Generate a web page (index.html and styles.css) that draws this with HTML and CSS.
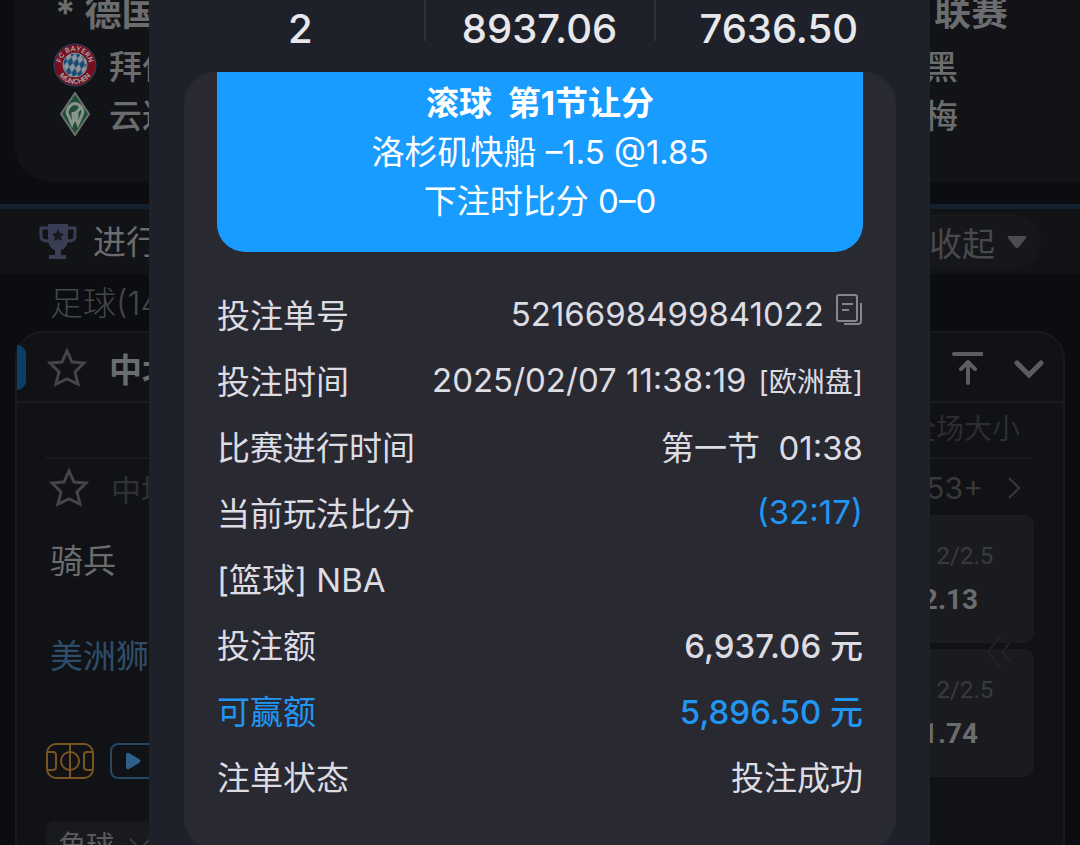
FILE: index.html
```html
<!DOCTYPE html>
<html lang="zh-CN">
<head>
  <meta charset="UTF-8">
  <meta name="viewport" content="width=device-width, initial-scale=1">
  <title>注单详情</title>
  <link rel="stylesheet" href="styles.css">
</head>
<body>
  <main class="page">
    <section class="league-card">
      <div class="league-title"><span>* 德国甲级</span><span>联赛</span></div>
      <div class="league-team">
        <svg class="crest" viewBox="0 0 44 44">
          <defs>
            <path id="arcTop" d="M8 22a14 14 0 0 1 28 0"/>
            <path id="arcBottom" d="M3 22a19 19 0 0 0 38 0"/>
            <pattern id="lozenge" width="6" height="10" patternUnits="userSpaceOnUse" patternTransform="rotate(12)">
              <rect width="6" height="10" fill="#8e959b"/>
              <path d="M3 0l3 5-3 5-3-5z" fill="#174b77"/>
            </pattern>
          </defs>
          <circle cx="22" cy="22" r="21" fill="#74101f" stroke="#21466b" stroke-width="1"/>
          <circle cx="22" cy="22" r="12" fill="url(#lozenge)" stroke="#8b8f94" stroke-width="1"/>
          <text class="crest-text"><textPath href="#arcTop" startOffset="50%">FC BAYERN</textPath></text>
          <text class="crest-text"><textPath href="#arcBottom" startOffset="50%">MÜNCHEN</textPath></text>
        </svg>
        <span>拜仁慕尼</span><span class="team-away">黑</span>
      </div>
      <div class="league-team">
        <svg class="crest" viewBox="0 0 44 44">
          <path d="M22 1l14 21-14 21L8 22z" fill="#1d4f35" stroke="#686f6c" stroke-width="2"/>
          <path d="M16 15q6-7 12 0M16 15q-3 5-1 8l4 9 3-9 3 9 4-9q2-4-1-8l-4 5v5l-2 3-2-3v-5" fill="none" stroke="#8a938e" stroke-width="3"/>
        </svg>
        <span>云达不莱</span><span class="team-away">梅</span>
      </div>
    </section>

    <section class="live-bar">
      <svg class="trophy" viewBox="0 0 38 36">
        <path d="M9 0h20v14q0 10-7 12v5h5v4H10v-4h6v-5q-7-2-7-12z" fill="#393e55"/>
        <path d="M9 4H2v9q0 4 8 4M29 4h7v9q0 4-8 4" fill="none" stroke="#393e55" stroke-width="3"/>
        <path d="M19 5l2 4 4 1-3 3 1 4-4-2-4 2 1-4-3-3 4-1z" fill="#17191f"/>
      </svg>
      <span class="live-title">进行中</span>
      <button class="collapse-btn" type="button">收起
        <svg width="20" height="14" viewBox="0 0 20 14"><path d="M2 1h16q2 0 1 2l-7 9q-2 2-4 0L1 3q-1-2 1-2z" fill="#4c4d50"/></svg>
      </button>
    </section>

    <h2 class="sport-name">足球(14)</h2>

    <section class="match-card">
      <header class="match-head">
        <svg class="star" viewBox="0 0 40 40"><path d="M20 3l5 11 12 1-9 9 3 12-11-5-11 5 3-12-9-9 12-1z"/></svg>
        <strong>中北美</strong>
        <div class="head-tools">
          <button type="button" aria-label="置顶"><svg width="32" height="34" viewBox="0 0 32 34"><path d="M3 3h28M17 32V12M10 18l7-7 7 7"/></svg></button>
          <button type="button" aria-label="展开"><svg width="32" height="34" viewBox="0 0 32 34"><path class="thick" d="M4 12l12 12 12-12"/></svg></button>
        </div>
      </header>
      <div class="market-name">全场大小</div>
      <div class="match-row">
        <svg class="star" viewBox="0 0 40 40"><path d="M20 3l5 11 12 1-9 9 3 12-11-5-11 5 3-12-9-9 12-1z"/></svg>
        <span>中场</span>
        <a href="#" class="more">153+
          <svg width="14" height="24" viewBox="0 0 14 24"><path d="M2 2l10 10L2 22" fill="none" stroke="#37383b" stroke-width="2"/></svg>
        </a>
      </div>
      <div class="match-body">
        <div class="teams">
          <span class="team">骑兵</span>
          <span class="team team-blue">美洲狮</span>
          <div class="media">
            <svg width="48" height="36" viewBox="0 0 48 36" fill="none" stroke="#79541f" stroke-width="2">
              <rect x="1" y="1" width="46" height="34" rx="9"/>
              <path d="M24 1v34M1 9h6q3 0 3 3v12q0 3-3 3H1M47 9h-6q-3 0-3 3v12q0 3 3 3h6"/>
              <circle cx="24" cy="18" r="9"/>
            </svg>
            <svg width="48" height="36" viewBox="0 0 48 36">
              <rect x="1" y="1" width="46" height="34" rx="7" fill="none" stroke="#254865" stroke-width="2"/>
              <path d="M16 12q0-3 3-2l10 6q3 2 0 4l-10 6q-3 1-3-2z" fill="#2f608b"/>
            </svg>
          </div>
          <button class="chip" type="button">角球
            <svg width="24" height="14" viewBox="0 0 24 14"><path d="M2 2l10 10L22 2" fill="none" stroke="#3a3b3e" stroke-width="2"/></svg>
          </button>
        </div>
        <div class="odds">
          <button class="odd" type="button"><span class="line">大 2/2.5</span><b>2.13</b></button>
          <button class="odd" type="button"><span class="line">小 2/2.5</span><b>1.74</b></button>
          <svg class="swipe" width="26" height="34" viewBox="0 0 26 34"><path d="M14 2L2 17l12 15M24 8l-8 9 8 9" fill="none" stroke="#222326" stroke-width="2"/></svg>
        </div>
      </div>
    </section>
  </main>

  <div class="overlay">
    <div class="modal" role="dialog" aria-label="注单详情">
      <div class="stats">
        <span>2</span>
        <span class="stat-mid">8937.06</span>
        <span>7636.50</span>
      </div>
      <article class="bet">
        <header class="bet-head">
          <p><strong>滚球 &nbsp;第1节让分</strong></p>
          <p>洛杉矶快船 –1.5 @1.85</p>
          <p>下注时比分 0–0</p>
        </header>
        <dl class="details">
          <div>
            <dt>投注单号</dt>
            <dd>5216698499841022
              <button class="copy-btn" type="button" aria-label="复制">
                <svg width="27" height="32" viewBox="0 0 27 32" fill="none" stroke="#85858e" stroke-width="2"><rect x="1" y="1" width="20" height="26" rx="2"/><path d="M6 10h11M6 16h7M25 9v18q0 3-3 3H8"/></svg>
              </button>
            </dd>
          </div>
          <div><dt>投注时间</dt><dd>2025/02/07 11:38:19 <small>[欧洲盘]</small></dd></div>
          <div><dt>比赛进行时间</dt><dd>第一节 &nbsp;01:38</dd></div>
          <div><dt>当前玩法比分</dt><dd class="blue">(32:17)</dd></div>
          <div><dt>[篮球] NBA</dt></div>
          <div><dt>投注额</dt><dd class="amount">6,937.06 元</dd></div>
          <div class="blue"><dt>可赢额</dt><dd class="amount">5,896.50 元</dd></div>
          <div><dt>注单状态</dt><dd>投注成功</dd></div>
        </dl>
      </article>
    </div>
  </div>
</body>
</html>
```

FILE: styles.css
```css
* {
  box-sizing: border-box;
}
body {
  margin: 0;
  height: 100vh;
  overflow: hidden;
  background-color: #0c0d11;
  color: #6b6c6e;
  font-family: Inter, "Noto Sans CJK SC", sans-serif;
  font-size: 33px;
}
button {
  padding: 0;
  border: 0;
  background: none;
  color: inherit;
  font: inherit;
  cursor: pointer;
}
svg {
  display: block;
  flex: none;
}

/* league card */
.league-card {
  margin-left: 15px;
  padding-bottom: 44px;
  border-radius: 0 0 0 36px;
  background-color: #121317;
}
.league-title {
  display: flex;
  justify-content: space-between;
  height: 40px;
  padding: 0 72px 0 40px;
  font-size: 37px;
  font-weight: 700;
  line-height: 26px;
}
.league-team {
  display: flex;
  align-items: center;
  height: 49px;
  padding: 0 122px 0 38px;
  font-weight: 500;
}
.crest {
  width: 44px;
  height: 44px;
  margin-right: 12px;
}
.crest-text {
  fill: #a3999c;
  font-size: 7px;
  font-weight: 700;
  text-anchor: middle;
}
.team-away {
  margin-left: auto;
}

/* live bar */
.live-bar {
  display: flex;
  align-items: center;
  height: 70px;
  margin-top: 22px;
  padding: 0 39px;
  border-top: 5px solid #13212f;
  background-color: #121317;
}
.trophy {
  width: 38px;
  height: 36px;
  margin-right: 16px;
}
.live-title {
  padding-bottom: 4px;
}
.collapse-btn {
  display: flex;
  align-items: center;
  gap: 12px;
  height: 55px;
  margin-left: auto;
  padding: 0 14px 0 20px;
  border-radius: 28px;
  background-color: #16171a;
  color: #48494c;
}
.sport-name {
  margin: 0;
  padding: 2px 0 0 50px;
  color: #45464a;
  font-size: 33px;
  font-weight: 300;
  line-height: 55px;
}

/* match card */
.match-card {
  position: relative;
  height: 600px;
  margin: 0 15px;
  border: 2px solid #18191c;
  border-radius: 28px 28px 0 0;
  background-color: #111216;
}
.match-card::before {
  content: "";
  position: absolute;
  top: 12px;
  left: 0;
  width: 9px;
  height: 45px;
  border-radius: 0 9px 9px 0;
  background-color: #0a3f68;
}
.match-head {
  display: flex;
  align-items: center;
  height: 70px;
  padding: 2px 18px 0 30px;
  border-bottom: 2px solid #1b1c1f;
}
.star {
  width: 40px;
  height: 40px;
  margin-right: 22px;
  fill: none;
  stroke: #444548;
  stroke-width: 3;
}
.head-tools {
  display: flex;
  gap: 30px;
  margin-left: auto;
}
.head-tools path {
  fill: none;
  stroke: #5c5d60;
  stroke-width: 4;
  stroke-linecap: round;
}
.head-tools .thick {
  stroke-width: 5;
}
.market-name {
  height: 56px;
  margin: 0 29px 0 28px;
  padding-right: 14px;
  border-bottom: 2px solid #191a1d;
  color: #2c2d30;
  font-size: 28px;
  line-height: 52px;
  text-align: right;
}
.match-row {
  display: flex;
  align-items: center;
  height: 56px;
  padding: 2px 42px 0 32px;
  color: #303134;
  font-size: 30px;
}
.more {
  display: flex;
  align-items: center;
  gap: 24px;
  margin-left: auto;
  color: #37383b;
  text-decoration: none;
}
.match-body {
  display: flex;
  justify-content: space-between;
  padding: 0 29px;
}
.teams {
  display: flex;
  flex-direction: column;
  align-items: flex-start;
}
.team {
  height: 95px;
  padding-left: 4px;
  line-height: 92px;
}
.team-blue {
  color: #2f4d68;
}
.media {
  display: flex;
  gap: 16px;
  margin: 38px 0 42px;
}
.chip {
  display: flex;
  align-items: center;
  gap: 14px;
  height: 46px;
  padding: 0 12px;
  border-radius: 8px;
  background-color: #191a1d;
  color: #5a5b5e;
  font-size: 28px;
}
.odds {
  position: relative;
  display: flex;
  flex-direction: column;
  gap: 6px;
}
.odd {
  display: flex;
  flex-direction: column;
  align-items: center;
  justify-content: center;
  width: 168px;
  height: 128px;
  padding-bottom: 2px;
  border-radius: 10px;
  background-color: #1a1b1e;
  font-family: Roboto, "Noto Sans CJK SC", sans-serif;
  font-size: 28px;
  line-height: 44px;
}
.line {
  color: #3a3b3e;
  font-size: 24px;
}
.swipe {
  position: absolute;
  top: 120px;
  right: 22px;
}

/* bet slip dialog */
.overlay {
  position: fixed;
  inset: 0;
  padding: 0 150px 0 149px;
}
.modal {
  min-height: 100%;
  background-color: #1f212a;
}
.stats {
  display: grid;
  grid-template-columns: 1fr 232px 1fr;
  padding: 0 28px 31px;
  color: #e8e8ec;
  font-size: 40px;
  font-weight: 500;
  line-height: 41px;
  text-align: center;
}
.stats span {
  height: 41px;
  padding-top: 8px;
}
.stats .stat-mid {
  border: solid #2f313a;
  border-width: 0 2px;
}
.bet {
  margin: 0 34px 0 35px;
  padding: 0 33px 41px;
  border-radius: 32px;
  background-color: #292932;
}
.bet-head {
  padding: 7px 0 26px;
  border-radius: 0 0 28px 28px;
  background-color: #189cff;
  color: #fff;
  line-height: 49px;
  text-align: center;
}
.bet-head p {
  margin: 0;
}
.details {
  margin: 29px 0 0;
  color: #dcdce2;
}
.details div {
  display: flex;
  align-items: center;
  justify-content: space-between;
  height: 66px;
}
.details dd {
  display: flex;
  align-items: center;
  gap: 12px;
  margin: 0;
}
.copy-btn {
  padding-bottom: 8px;
}
.details small {
  font-size: 28px;
}
.details .amount {
  font-weight: 500;
}
.details .blue {
  color: #2196f3;
}
```
